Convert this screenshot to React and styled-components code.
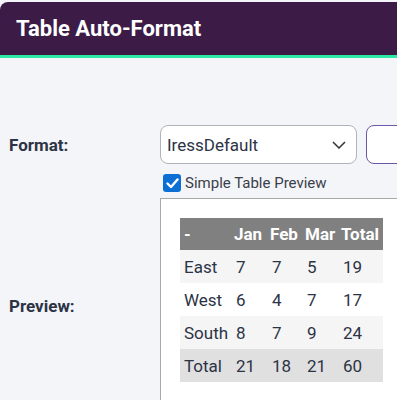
import React from "react";
import styled, { createGlobalStyle } from "styled-components";

const Global = createGlobalStyle`
  html, body { margin: 0; padding: 0; background: #f4f5f9; overflow: hidden; }
  body { font-family: Roboto, "Noto Sans", Arial, sans-serif; }
`;

const Page = styled.div`
  width: 397px;
  height: 400px;
  overflow: hidden;
  padding-top: 2px;
  box-sizing: border-box;
`;

const Header = styled.header`
  height: 53px;
  background: #3c1c46;
  border-top-left-radius: 8px;
  border-bottom: 3px solid #2ee8a6;
  display: flex;
  align-items: center;
  padding-left: 16px;
`;

const Title = styled.h1`
  margin: 0;
  font-size: 22px;
  font-weight: 700;
  color: #ffffff;
`;

const Form = styled.div`
  display: grid;
  grid-template-columns: 160px 1fr;
  padding-top: 67px;
`;

const Label = styled.div`
  font-weight: 700;
  font-size: 17px;
  color: #2c3345;
  padding-left: 9px;
  padding-top: ${(p) => p.$shift || 0}px;
  display: flex;
  align-items: center;
`;

const Controls = styled.div`
  display: flex;
  gap: 9px;
`;

const Select = styled.div`
  width: 197px;
  height: 39px;
  box-sizing: border-box;
  border: 1px solid #b2b2ba;
  border-radius: 8px;
  background: #fff;
  display: flex;
  align-items: center;
  justify-content: space-between;
  padding: 0 10px 0 6px;
  font-size: 17px;
  color: #2c3345;
`;

const Button = styled.div`
  width: 60px;
  height: 39px;
  box-sizing: border-box;
  border: 1.5px solid #6b56a8;
  border-radius: 8px;
  background: #fff;
  flex-shrink: 0;
`;

const CheckRow = styled.label`
  grid-column: 2;
  display: flex;
  align-items: center;
  gap: 4px;
  margin-top: 10px;
  margin-bottom: 6px;
  margin-left: 3px;
  font-size: 15px;
  color: #3a3f4a;
`;

const Box = styled.span`
  width: 18px;
  height: 18px;
  border-radius: 3px;
  background: #0b6fd4;
  display: flex;
  align-items: center;
  justify-content: center;
`;

const PreviewBox = styled.div`
  height: 210px;
  width: 260px;
  box-sizing: border-box;
  border: 1px solid #a9a9a9;
  background: #fff;
  padding: 19px;
`;

const Table = styled.table`
  border-collapse: collapse;
  font-size: 17px;
  color: #2c3345;
  table-layout: fixed;
`;

const Th = styled.th`
  background: #808080;
  color: #fff;
  font-weight: 700;
  text-align: left;
  height: 32px;
  padding: 0 0 0 ${(p) => (p.$first ? "4px" : "2px")};
  width: ${(p) => p.$w}px;
  box-sizing: border-box;
  white-space: nowrap;
`;

const Tr = styled.tr`
  background: ${(p) => p.$bg};
`;

const Td = styled.td`
  height: 33px;
  padding: 0 0 0 4px;
  white-space: nowrap;
`;

const cols = [
  ["-", 52],
  ["Jan", 36],
  ["Feb", 35],
  ["Mar", 36],
  ["Total", 44],
];

const rows = [
  ["East", 7, 7, 5, 19, "#f5f5f5"],
  ["West", 6, 4, 7, 17, "#ffffff"],
  ["South", 8, 7, 9, 24, "#f5f5f5"],
  ["Total", 21, 18, 21, 60, "#e0e0e0"],
];

export default function App() {
  return (
    <Page>
      <Global />
      <Header>
        <Title>Table Auto-Format</Title>
      </Header>
      <Form>
        <Label>Format:</Label>
        <Controls>
          <Select>
            <span>IressDefault</span>
            <svg width="14" height="8" viewBox="0 0 14 8" fill="none">
              <path d="M1 1l6 6 6-6" stroke="#333" strokeWidth="1.5" />
            </svg>
          </Select>
          <Button />
        </Controls>
        <CheckRow>
          <Box>
            <svg width="13" height="11" viewBox="0 0 13 11" fill="none">
              <path d="M1.5 5.5l3.5 3.5 6.5-7.5" stroke="#fff" strokeWidth="2.4" strokeLinecap="round" strokeLinejoin="round" />
            </svg>
          </Box>
          Simple Table Preview
        </CheckRow>
        <Label $shift={6}>Preview:</Label>
        <PreviewBox>
          <Table>
            <thead>
              <tr>
                {cols.map(([t, w], i) => (
                  <Th key={t} $w={w} $first={i === 0}>{t}</Th>
                ))}
              </tr>
            </thead>
            <tbody>
              {rows.map((r) => (
                <Tr key={r[0]} $bg={r[5]}>
                  {r.slice(0, 5).map((c, i) => (
                    <Td key={i}>{c}</Td>
                  ))}
                </Tr>
              ))}
            </tbody>
          </Table>
        </PreviewBox>
      </Form>
    </Page>
  );
}
